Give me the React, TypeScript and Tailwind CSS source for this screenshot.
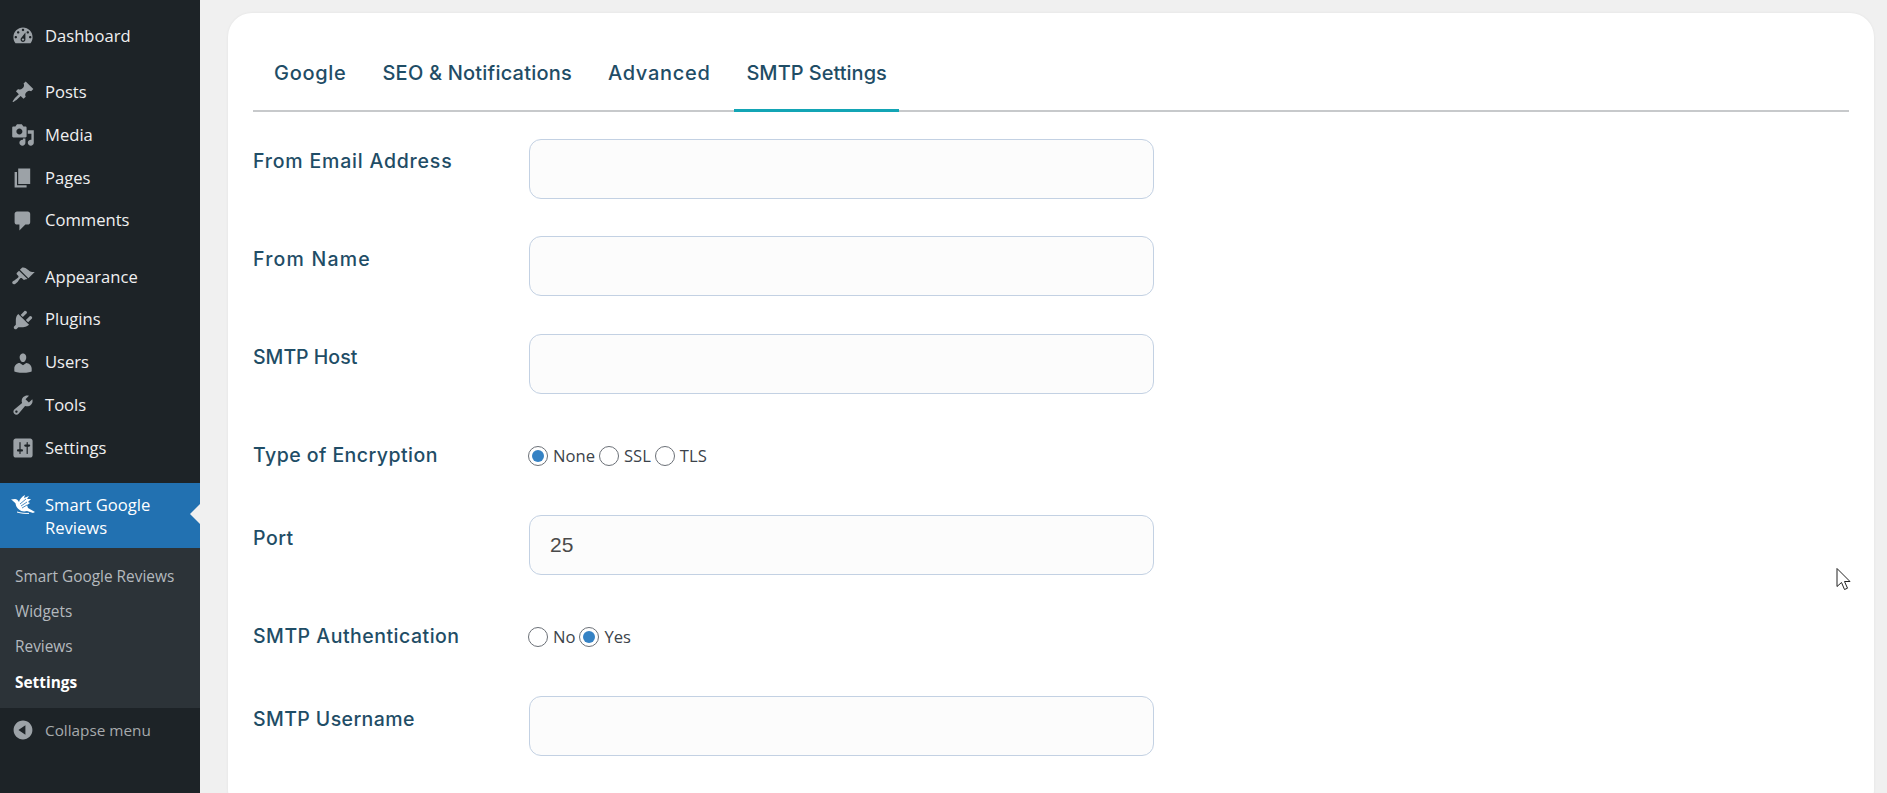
import React from "react";

const ic: Record<string, string> = {
  dash: "M3.76 16h12.48c1.1-1.37 1.76-3.11 1.76-5 0-4.42-3.58-8-8-8s-8 3.58-8 8c0 1.89.66 3.63 1.76 5zM10 4c.55 0 1 .45 1 1s-.45 1-1 1-1-.45-1-1 .45-1 1-1zM6 6c.55 0 1 .45 1 1s-.45 1-1 1-1-.45-1-1 .45-1 1-1zm8 0c.55 0 1 .45 1 1s-.45 1-1 1-1-.45-1-1 .45-1 1-1zm-5.37 5.55L12 7v6c0 1.1-.9 2-2 2s-2-.9-2-2c0-.57.24-1.08.63-1.45zM4 10c.55 0 1 .45 1 1s-.45 1-1 1-1-.45-1-1 .45-1 1-1zm12 0c.55 0 1 .45 1 1s-.45 1-1 1-1-.45-1-1 .45-1 1-1zm-5 3c0-.55-.45-1-1-1s-1 .45-1 1 .45 1 1 1 1-.45 1-1z",
  post: "M10.44 3.02l1.82-1.82 6.36 6.35-1.83 1.82c-1.05-.68-2.48-.57-3.41.36l-.75.75c-.92.93-1.04 2.35-.35 3.41l-1.83 1.82-2.41-2.41-2.8 2.79c-.42.42-3.38 2.71-3.8 2.29s1.86-3.39 2.28-3.81l2.79-2.79L4.1 9.36l1.83-1.82c1.05.69 2.48.57 3.4-.36l.75-.75c.93-.92 1.05-2.35.36-3.41z",
  media: "M13 11V4c0-.55-.45-1-1-1h-1.67L9 1H5L3.67 3H2c-.55 0-1 .45-1 1v7c0 .55.45 1 1 1h10c.55 0 1-.45 1-1zM7 4.5c1.38 0 2.5 1.12 2.5 2.5S8.38 9.5 7 9.5 4.5 8.38 4.5 7 5.62 4.5 7 4.5zM14 6h5v10.5c0 1.38-1.12 2.5-2.5 2.5S14 17.88 14 16.5s1.12-2.5 2.5-2.5c.17 0 .34.02.5.05V9h-3V6zm-4 8.05V13h2v3.5c0 1.38-1.12 2.5-2.5 2.5S7 17.88 7 16.5 8.12 14 9.5 14c.17 0 .34.02.5.05z",
  page: "M6 15V2h10v13H6zm-1 1h8v2H3V5h2v11z",
  comment: "M5 2h9c1.1 0 2 .9 2 2v7c0 1.1-.9 2-2 2h-2l-5 5v-5H5c-1.1 0-2-.9-2-2V4c0-1.1.9-2 2-2z",
  appearance: "M14.48 11.06L7.41 3.99l1.5-1.5c.5-.56 2.3-.47 3.51.32 1.21.8 1.43 1.28 2.91 2.1 1.18.64 2.45 1.26 4.45.85zm-.71.71L6.7 4.7 4.93 6.47c-.39.39-.39 1.02 0 1.41l1.06 1.06c.39.39.39 1.03 0 1.42-.6.6-1.43 1.11-2.21 1.69-.35.26-.7.53-1.01.84C1.43 13.23.4 14.67 1.41 15.68c1.01 1.01 2.45-.02 3.79-1.37.31-.31.58-.66.84-1.01.58-.78 1.09-1.61 1.69-2.21.39-.39 1.02-.39 1.41 0l1.06 1.06c.39.39 1.02.39 1.41 0z",
  plugin: "M13.11 4.36L9.87 7.6 8 5.73l3.24-3.24c.35-.34 1.05-.2 1.56.32.52.51.66 1.21.31 1.55zm-8 1.77l.91-1.12 9.01 9.01-1.19.84c-.71.71-2.63 1.16-3.82 1.16H6.14L4.9 17.26c-.59.59-1.54.59-2.12 0-.59-.58-.59-1.53 0-2.12l1.24-1.24v-3.88c0-1.13.4-3.19 1.09-3.89zm7.26 3.97l3.24-3.24c.34-.35 1.04-.21 1.55.31.52.51.66 1.21.31 1.55l-3.24 3.25z",
  users: "M10 9.25c-2.27 0-2.73-3.44-2.73-3.44C7 4.02 7.82 2 9.97 2c2.16 0 2.98 2.02 2.71 3.81 0 0-.41 3.44-2.68 3.44zm0 2.57L12.72 10c2.39 0 4.52 2.33 4.52 4.53v2.49s-3.65 1.13-7.24 1.13c-3.65 0-7.24-1.13-7.24-1.13v-2.49c0-2.25 1.94-4.48 4.47-4.48z",
  tools: "M16.68 9.77c-1.34 1.34-3.3 1.67-4.95.99l-5.41 6.52c-.99.99-2.59.99-3.58 0s-.99-2.59 0-3.57l6.52-5.42c-.68-1.65-.35-3.61.99-4.95 1.28-1.28 3.12-1.62 4.72-1.06l-2.89 2.89 2.82 2.82 2.86-2.87c.53 1.58.18 3.39-1.08 4.65zM3.81 16.21c.4.39 1.04.39 1.43 0 .4-.4.4-1.04 0-1.43-.39-.4-1.03-.4-1.43 0-.39.39-.39 1.03 0 1.43z",
  settings: "M18 16V4c0-1.1-.9-2-2-2H4c-1.1 0-2 .9-2 2v12c0 1.1.9 2 2 2h12c1.1 0 2-.9 2-2zM8 11h1c.55 0 1 .45 1 1s-.45 1-1 1H8v1.5c0 .28-.22.5-.5.5s-.5-.22-.5-.5V13H6c-.55 0-1-.45-1-1s.45-1 1-1h1V5.5c0-.28.22-.5.5-.5s.5.22.5.5V11zm5-2h-1c-.55 0-1-.45-1-1s.45-1 1-1h1V5.5c0-.28.22-.5.5-.5s.5.22.5.5V7h1c.55 0 1 .45 1 1s-.45 1-1 1h-1v5.5c0 .28-.22.5-.5.5s-.5-.22-.5-.5V9z",
  collapse: "M10 2.16c4.33 0 7.84 3.51 7.84 7.84s-3.51 7.84-7.84 7.84S2.16 14.33 2.16 10 5.71 2.16 10 2.16zm2 11.72V6.12L6.18 9.97z",
};

function Icon({ d }: { d: string }) {
  return (
    <svg viewBox="0 0 20 20" className="w-6 h-6 fill-[#9ca2a7] shrink-0">
      <path d={d} />
    </svg>
  );
}

function Item({ icon, label }: { icon: string; label: string }) {
  return (
    <div className="h-[42.8px] flex items-center pl-[11px] gap-[10px] text-[16.6px] text-[#f0f0f1]">
      <Icon d={ic[icon]} />
      <span>{label}</span>
    </div>
  );
}

function Bird() {
  return (
    <svg viewBox="4 3 25 22" className="w-[25px] h-[22px] shrink-0">
      <path
        className="fill-white"
        d="M5 9.5L9 9c1.6 0 3 1 4 3 .8-3 3-5.4 6-7l-1 3 5-2-2 3h4l-3 3 2 1-3 2 1 3 7 4-2 1-6-2c-3 1-6 .4-8-1.4-2-1.6-3.4-4-3.4-6C8 11.6 6.6 10.6 5 9.5z"
      />
      <path className="stroke-[#2271b1] fill-none" strokeWidth="0.8" d="M14 14l6-5M15 16l6-4M16 18l5-3" />
      <path className="stroke-white fill-none" strokeWidth="1" d="M11 22c4 1.2 8 1.6 12 1.4" />
    </svg>
  );
}

function Field({ label, value, cls, lcls }: { label: string; value?: string; cls: string; lcls: string }) {
  return (
    <div className={"flex " + cls}>
      <label className={"w-[276px] shrink-0 text-[19.5px] leading-[30px] font-medium text-[#1f4d66] " + lcls}>{label}</label>
      <div className="w-[625px] h-[60px] rounded-[12px] border border-[#c3d1e3] bg-[#fcfcfc] pl-[20px] flex items-center font-['Liberation_Sans',sans-serif] text-[21px] text-[#4a4a4a]">
        {value}
      </div>
    </div>
  );
}

function Radio({ label, on }: { label: string; on?: boolean }) {
  return (
    <span className="flex items-center gap-[5px]">
      <span className="w-5 h-5 rounded-full border border-[#6b7077] bg-white flex items-center justify-center">
        {on && <span className="w-[12px] h-[12px] rounded-full bg-[#3582c4]" />}
      </span>
      <span className="font-['Open_Sans',sans-serif] text-[16.6px] text-[#3c434a]">{label}</span>
    </span>
  );
}

function RadioRow({ label, opts, cls, lcls }: { label: string; opts: [string, boolean][]; cls: string; lcls: string }) {
  return (
    <div className={"flex items-center h-[30px] " + cls}>
      <label className={"w-[275px] shrink-0 text-[19.5px] font-medium text-[#1f4d66] " + lcls}>{label}</label>
      <div className="flex items-center gap-[4px]">
        {opts.map(([l, on]) => (
          <Radio key={l} label={l} on={on} />
        ))}
      </div>
    </div>
  );
}

export default function App() {
  return (
    <div className="relative w-[1887px] h-[793px] overflow-hidden flex bg-[#f0f0f0] font-['Inter',sans-serif]">
      <aside className="w-[200px] shrink-0 h-full bg-[#1d2327] pt-[15px] font-['Open_Sans',sans-serif]">
        <Item icon="dash" label="Dashboard" />
        <div className="h-[13.3px]" />
        <Item icon="post" label="Posts" />
        <Item icon="media" label="Media" />
        <Item icon="page" label="Pages" />
        <Item icon="comment" label="Comments" />
        <div className="h-[13.3px]" />
        <Item icon="appearance" label="Appearance" />
        <Item icon="plugin" label="Plugins" />
        <Item icon="users" label="Users" />
        <Item icon="tools" label="Tools" />
        <Item icon="settings" label="Settings" />
        <div className="h-[13.4px]" />
        <div className="relative h-[65px] bg-[#2271b1] flex pl-[10px] gap-[2px] pt-[10px] text-[16.6px] leading-[23px] text-white">
          <Bird />
          <span className="w-[130px] pl-[8px]">Smart Google Reviews</span>
          <span className="absolute right-0 top-[21px] border-y-[10px] border-y-transparent border-r-[10px] border-r-[#f0f0f0]" />
        </div>
        <div className="h-[160px] bg-[#2c3338] pt-[11px] pl-[15px] text-[15.4px] text-[#b4b9be]">
          <div className="h-[35.2px] flex items-center">Smart Google Reviews</div>
          <div className="h-[35.2px] flex items-center">Widgets</div>
          <div className="h-[35.2px] flex items-center">Reviews</div>
          <div className="h-[35.2px] flex items-center font-bold text-white">Settings</div>
        </div>
        <div className="h-[45px] flex items-center pl-[11px] gap-[10px] text-[15.3px] text-[#a7aaad]">
          <Icon d={ic.collapse} />
          <span>Collapse menu</span>
        </div>
      </aside>
      <main className="flex-1 pl-[28px] pr-[13px] pt-[13px] min-w-0">
        <div className="h-[800px] bg-white rounded-[24px] shadow-[0_0_3px_rgba(0,0,0,0.06)] px-[25px] pt-[33px]">
          <div className="flex gap-[12px] h-[66px] border-b-2 border-[#c7c9cb] pl-[9px] font-medium text-[#1f4d66] text-[20px]">
            <div className="px-[12px] pt-[12px] tracking-[0.7px]">Google</div>
            <div className="px-[12px] pt-[12px] tracking-[0.2px]">SEO &amp; Notifications</div>
            <div className="px-[12px] pt-[12px] tracking-[0.7px]">Advanced</div>
            <div className="relative px-[12px] pt-[12px]">
              SMTP Settings
              <span className="absolute left-0 right-0 -bottom-[2px] h-[3px] bg-[#13a5b5]" />
            </div>
          </div>
          <Field label="From Email Address" cls="mt-[27px]" lcls="pt-[7px] tracking-[0.8px]" />
          <Field label="From Name" cls="mt-[37px]" lcls="pt-[8px] tracking-[1.2px]" />
          <Field label="SMTP Host" cls="mt-[38px]" lcls="pt-[8px]" />
          <RadioRow label="Type of Encryption" cls="mt-[47px]" lcls="tracking-[0.45px]" opts={[["None", true], ["SSL", false], ["TLS", false]]} />
          <Field label="Port" value="25" cls="mt-[44px]" lcls="pt-[8px] tracking-[0.5px]" />
          <RadioRow label="SMTP Authentication" cls="mt-[47px]" lcls="tracking-[0.5px]" opts={[["No", false], ["Yes", true]]} />
          <Field label="SMTP Username" cls="mt-[44px]" lcls="pt-[8px] tracking-[0.4px]" />
        </div>
      </main>
      <svg viewBox="0 0 16 24" className="absolute left-[1836px] top-[567px] w-[16px] h-[25px] fill-white stroke-[#222]" strokeWidth="1">
        <path d="M1 1v18l4.5-4 3 7 3-1.3-3-6.7H14z" />
      </svg>
    </div>
  );
}
